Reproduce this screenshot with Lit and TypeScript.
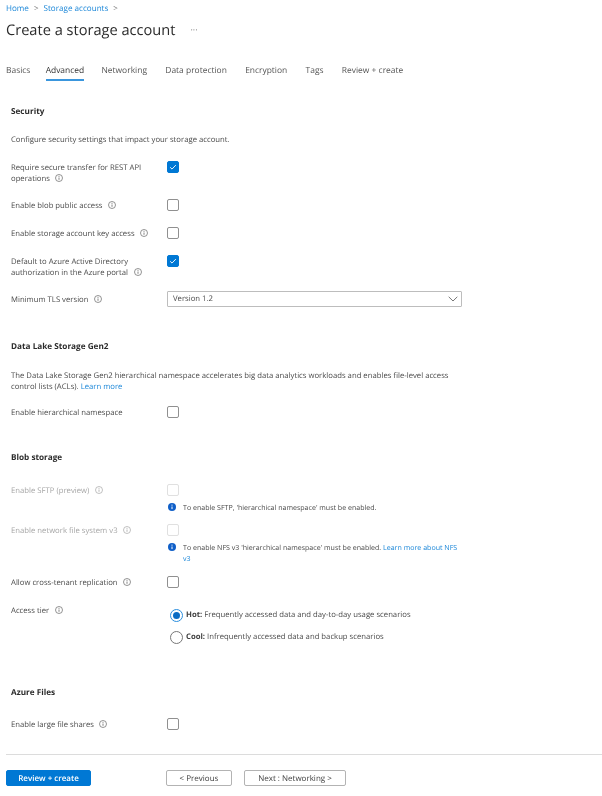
import { LitElement, html, css, svg, nothing } from "lit";
import { customElement } from "lit/decorators.js";

const info = svg`<svg class="i" viewBox="0 0 8 8" width="8" height="8"><circle cx="4" cy="4" r="3.5" fill="none" stroke="currentColor" stroke-width=".7"/><path d="M4 3.5v2.3" stroke="currentColor" stroke-width=".8"/><circle cx="4" cy="2.3" r=".5" fill="currentColor"/></svg>`;
const infoSolid = svg`<svg class="solid" viewBox="0 0 8 8" width="8" height="8"><circle cx="4" cy="4" r="4" fill="#0f5fc8"/><path d="M4 3.5v2.6" stroke="#fff" stroke-width="1"/><circle cx="4" cy="2.1" r=".6" fill="#fff"/></svg>`;
const check = svg`<svg viewBox="0 0 12 12" width="10" height="10"><path d="M2.6 6.3l2.2 2.2 4.6-4.8" fill="none" stroke="#fff" stroke-width="1.1"/></svg>`;
const chevron = svg`<svg class="chev" viewBox="0 0 10 6" width="10" height="6"><path d="M.7.8L5 5l4.3-4.2" fill="none" stroke="#666" stroke-width=".9"/></svg>`;

type Box = "on" | "off" | "dis";

@customElement("app-root")
export class AppRoot extends LitElement {
  static styles = css`
    :host { display: block; width: 602px; height: 796px; overflow: hidden; background: #fff; color: #4a4a4a;
      font-family: "Open Sans", "Noto Sans", sans-serif; font-size: 7.72px; line-height: 11px;
      text-rendering: geometricPrecision; filter: blur(0.3px); }
    * { box-sizing: border-box; }
    a { color: #1a86d8; text-decoration: none; }
    .crumbs { display: flex; align-items: center; gap: 5px; padding: 3px 0 0 6px; height: 14px; font-size: 8.1px; color: #777; }
    .title { display: flex; align-items: center; padding: 6px 0 0 6px; height: 26px; font-size: 14.6px; line-height: 20px; color: #2b2b2b; font-weight: 500; }
    .more { margin-left: 15px; font-size: 9px; color: #777; }
    .tabs { display: flex; gap: 18.3px; padding: 25px 0 0 6px; height: 41px; font-size: 8.45px; color: #555; }
    .tab { height: 16px; line-height: 11px; }
    .tab.act { color: #333; border-bottom: 2px solid #3a96dd; margin: 0 -1px 0 -3px; }
    h2 { margin: 0; font-size: 8.2px; line-height: 12px; font-weight: 700; color: #2b2b2b; }
    .form { padding-left: 11px; }
    p { margin: 0; width: 445px; }
    .row { display: grid; grid-template-columns: 156px 1fr; }
    .lab { width: 152px; padding-top: 2px; }
    .lab.wrap { width: 140px; }
    .lab.tls { padding-top: 4px; }
    .dim { color: #a6a6a6; }
    .i { vertical-align: -1px; margin-left: 3.5px; color: #666; }
    .dim .i { color: #a6a6a6; }
    .box { display: flex; align-items: center; justify-content: center; width: 12px; height: 12px; border: 1px solid #909090; border-radius: 2px; background: #fff; }
    .box.on { background: #0078d4; border-color: #0078d4; }
    .box.dis { border-color: #e0e0e0; }
    .note { display: grid; grid-template-columns: 8px 1fr; column-gap: 8px; width: 296px; margin-top: 7px; font-size: 7.07px; }
    .solid { margin: 0 0 0 1px; }
    .select { display: flex; align-items: center; justify-content: space-between; width: 295px; height: 16px; padding: 0 3px 0 5px; border: 1px solid #bdbdbd; border-radius: 1px; }
    .tiers { display: grid; gap: 9px; padding-top: 5px; }
    .radio { display: flex; align-items: center; gap: 3px; height: 13px; margin-left: 3px; }
    .dot { display: flex; align-items: center; justify-content: center; width: 13px; height: 13px; border-radius: 50%; border: 1px solid #777; }
    .dot.on { border-color: #2a8ede; }
    .dot.on::after { content: ""; width: 7px; height: 7px; border-radius: 50%; background: #0a6cc4; }
    .radio b { font-weight: 700; color: #404040; }
    .rule { height: 1px; margin: 23px 0 0 6px; background: #dcdcdc; }
    .foot { display: flex; padding: 15px 0 0 6px; }
    .btn { display: flex; align-items: center; justify-content: center; height: 16px; border: 1px solid #b3b3b3; border-radius: 2px; font-size: 8px; color: #404040; }
    .primary { width: 85px; margin-right: 75px; background: #0078d4; border-color: #0078d4; color: #fff; font-weight: 600; }
    .prev { width: 66px; margin-right: 12px; }
    .next { width: 102px; }
  `;

  private box(k: Box) {
    return html`<div class="box ${k}">${k === "on" ? check : nothing}</div>`;
  }

  private row(label: unknown, k: Box, top: number, after: unknown = nothing, wrap = false) {
    return html`<div class="row" style="margin-top:${top}px">
      <div class="lab ${k === "dis" ? "dim" : ""} ${wrap ? "wrap" : ""}">${label}</div>
      <div>${this.box(k)}${after}</div>
    </div>`;
  }

  render() {
    return html`
      <div class="crumbs"><a>Home</a><span>&gt;</span><a>Storage accounts</a><span>&gt;</span></div>
      <div class="title">Create a storage account<span class="more">···</span></div>
      <div class="tabs">
        <span class="tab">Basics</span><span class="tab act">Advanced</span><span class="tab">Networking</span>
        <span class="tab">Data protection</span><span class="tab">Encryption</span><span class="tab">Tags</span><span class="tab">Review + create</span>
      </div>
      <div class="form">
        <h2 style="margin-top:25px">Security</h2>
        <p style="margin-top:17px">Configure security settings that impact your storage account.</p>
        ${this.row(html`Require secure transfer for REST API operations ${info}`, "on", 15, nothing, true)}
        ${this.row(html`Enable blob public access ${info}`, "off", 14)}
        ${this.row(html`Enable storage account key access ${info}`, "off", 15)}
        ${this.row(html`Default to Azure Active Directory authorization in the Azure portal ${info}`, "on", 15, nothing, true)}
        <div class="row" style="margin-top:12px">
          <div class="lab tls">Minimum TLS version ${info}</div>
          <div class="select"><span>Version 1.2</span>${chevron}</div>
        </div>
        <h2 style="margin-top:34px">Data Lake Storage Gen2</h2>
        <p style="margin-top:18px">The Data Lake Storage Gen2 hierarchical namespace accelerates big data analytics workloads and enables file-level access control lists (ACLs). <a>Learn more</a></p>
        ${this.row(html`Enable hierarchical namespace`, "off", 13)}
        <h2 style="margin-top:33px">Blob storage</h2>
        ${this.row(html`Enable SFTP (preview) ${info}`, "dis", 20, html`<div class="note">${infoSolid}<span>To enable SFTP, 'hierarchical namespace' must be enabled.</span></div>`)}
        ${this.row(html`Enable network file system v3 ${info}`, "dis", 10, html`<div class="note">${infoSolid}<span>To enable NFS v3 'hierarchical namespace' must be enabled. <a>Learn more about NFS v3</a></span></div>`)}
        ${this.row(html`Allow cross-tenant replication ${info}`, "off", 11)}
        <div class="row" style="margin-top:15px">
          <div class="lab">Access tier ${info}</div>
          <div class="tiers">
            <div class="radio"><span class="dot on"></span><span><b>Hot:</b> Frequently accessed data and day-to-day usage scenarios</span></div>
            <div class="radio"><span class="dot"></span><span><b>Cool:</b> Infrequently accessed data and backup scenarios</span></div>
          </div>
        </div>
        <h2 style="margin-top:43px">Azure Files</h2>
        ${this.row(html`Enable large file shares ${info}`, "off", 19)}
      </div>
      <div class="rule"></div>
      <div class="foot">
        <div class="btn primary">Review + create</div>
        <div class="btn prev">&lt; Previous</div>
        <div class="btn next">Next : Networking &gt;</div>
      </div>
    `;
  }
}
